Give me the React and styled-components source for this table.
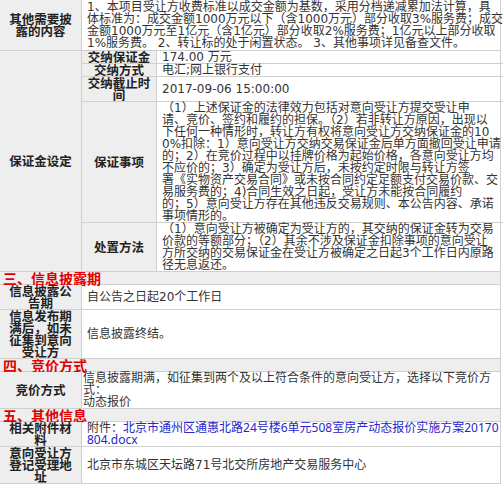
import React from "react";
import styled, { createGlobalStyle } from "styled-components";

const GlobalStyle = createGlobalStyle`
  body {
    margin: 0;
    background: #ffffff;
    font-family: "DejaVu Sans", "Noto Sans CJK SC", sans-serif;
  }
`;

const Table = styled.div`
  width: 501px;
  border-right: 1px solid #cfcfcf;
  box-sizing: border-box;
  color: #333;
  font-size: 12px;
  line-height: 12px;
`;

const Row = styled.div`
  display: grid;
  grid-template-columns: 82px 1fr;
  border-bottom: 1px solid #cfcfcf;
`;

const Label = styled.div`
  display: flex;
  align-items: center;
  justify-content: center;
  padding: 0 4px;
  background: #eeeeee;
  border-right: 1px solid #cfcfcf;
  font-family: "Noto Sans CJK SC", sans-serif;
  font-size: 12.5px;
  font-weight: bold;
  line-height: 12px;
  text-align: center;
  color: #222;
`;

const Content = styled.div`
  display: flex;
  align-items: center;
  padding: ${(p) => (p.$pad ? p.$pad : "0 3px 0 5px")};
  white-space: ${(p) => (p.$nowrap ? "nowrap" : "normal")};
  word-break: ${(p) => (p.$breakAll ? "break-all" : "normal")};
`;

const SubTable = styled.div`
  display: flex;
  flex-direction: column;
`;

const SubRow = styled.div`
  display: grid;
  grid-template-columns: 75px 1fr;
  border-bottom: 1px solid #cfcfcf;
  &:last-child {
    border-bottom: none;
  }
`;

const Section = styled.div`
  background: #eeeeee;
  border-bottom: 1px solid #cfcfcf;
  padding-left: 3px;
  color: #e20000;
  font-family: "Noto Sans CJK SC", sans-serif;
  font-size: 14px;
  font-weight: bold;
  line-height: 12px;
`;

const Link = styled.a`
  color: #2525cc;
  text-decoration: none;
  font-family: "Noto Sans", "Noto Sans CJK SC", sans-serif;
`;

const Lines = ({ lines }) => (
  <span>
    {lines.map((l, i) => (
      <React.Fragment key={i}>
        {l}
        {i < lines.length - 1 && <br />}
      </React.Fragment>
    ))}
  </span>
);

const otherInfo = [
  "1、本项目受让方收费标准以成交金额为基数，采用分档递减累加法计算，具",
  "体标准为：成交金额1000万元以下（含1000万元）部分收取3%服务费；成交",
  "金额1000万元至1亿元（含1亿元）部分收取2%服务费；1亿元以上部分收取",
  "1%服务费。 2、转让标的处于闲置状态。 3、其他事项详见备查文件。",
];

const guarantee = [
  "（1）上述保证金的法律效力包括对意向受让方提交受让申",
  "请、竞价、签约和履约的担保。（2）若非转让方原因，出现以",
  "下任何一种情形时，转让方有权将意向受让方交纳保证金的10",
  "0%扣除：1）意向受让方交纳交易保证金后单方面撤回受让申请",
  "的；2）在竞价过程中以挂牌价格为起始价格，各意向受让方均",
  "不应价的；3）确定为受让方后，未按约定时限与转让方签",
  "署《实物资产交易合同》或未按合同约定足额支付交易价款、交",
  "易服务费的；4)合同生效之日起，受让方未能按合同履约",
  "的；5）意向受让方存在其他违反交易规则、本公告内容、承诺",
  "事项情形的。",
];

const handling = [
  "（1）意向受让方被确定为受让方的，其交纳的保证金转为交易",
  "价款的等额部分；（2）其余不涉及保证金扣除事项的意向受让",
  "方所交纳的交易保证金在受让方被确定之日起3个工作日内原路",
  "径无息返还。",
];

const bidding = [
  "信息披露期满，如征集到两个及以上符合条件的意向受让方，选择以下竞价方",
  "式：",
  "动态报价",
];

export default function App() {
  return (
    <>
      <GlobalStyle />
      <Table>
        <Row>
          <Label>其他需要披露的内容</Label>
          <Content $nowrap $pad="1px 0 1px 5px">
            <Lines lines={otherInfo} />
          </Content>
        </Row>

        <Row>
          <Label>保证金设定</Label>
          <SubTable>
            <SubRow>
              <Label>交纳保证金</Label>
              <Content>174.00 万元</Content>
            </SubRow>
            <SubRow>
              <Label>交纳方式</Label>
              <Content>电汇;网上银行支付</Content>
            </SubRow>
            <SubRow>
              <Label>交纳截止时间</Label>
              <Content>2017-09-06 15:00:00</Content>
            </SubRow>
            <SubRow>
              <Label>保证事项</Label>
              <Content $nowrap>
                <Lines lines={guarantee} />
              </Content>
            </SubRow>
            <SubRow>
              <Label>处置方法</Label>
              <Content $nowrap>
                <Lines lines={handling} />
              </Content>
            </SubRow>
          </SubTable>
        </Row>

        <Section>三、信息披露期</Section>
        <Row>
          <Label>信息披露公告期</Label>
          <Content>自公告之日起20个工作日</Content>
        </Row>
        <Row>
          <Label>信息发布期满后，如未征集到意向受让方</Label>
          <Content>信息披露终结。</Content>
        </Row>

        <Section>四、竞价方式</Section>
        <Row>
          <Label>竞价方式</Label>
          <Content $nowrap $pad="0 0 0 1px">
            <Lines lines={bidding} />
          </Content>
        </Row>

        <Section>五、其他信息</Section>
        <Row>
          <Label>相关附件材料</Label>
          <Content $breakAll $pad="0 0 0 5px">
            <span>
              附件：
              <Link href="#">
                北京市通州区通惠北路24号楼6单元508室房产动态报价实施方案20170804.docx
              </Link>
            </span>
          </Content>
        </Row>
        <Row>
          <Label>意向受让方登记受理地址</Label>
          <Content>北京市东城区天坛路71号北交所房地产交易服务中心</Content>
        </Row>
      </Table>
    </>
  );
}
